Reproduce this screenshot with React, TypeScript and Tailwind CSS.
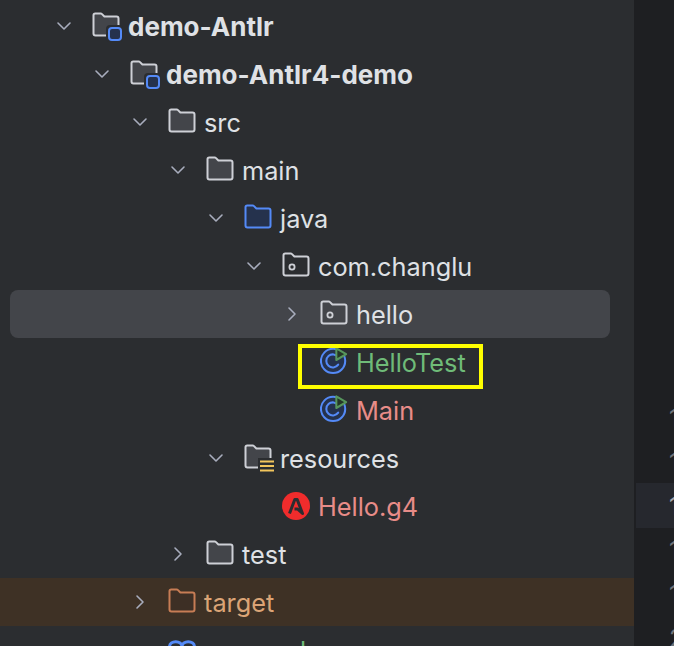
import React from 'react';
import { ChevronDown, ChevronRight } from 'lucide-react';

type Icon = 'module' | 'folder' | 'source' | 'package' | 'resources' | 'target' | 'runClass' | 'antlr' | 'maven';

interface Row {
  name: string;
  depth: number;
  icon: Icon;
  open?: boolean;
  leaf?: boolean;
  bold?: boolean;
  color?: string;
}

const rows: Row[] = [
  { name: 'demo-Antlr', depth: 0, icon: 'module', open: true, bold: true },
  { name: 'demo-Antlr4-demo', depth: 1, icon: 'module', open: true, bold: true },
  { name: 'src', depth: 2, icon: 'folder', open: true },
  { name: 'main', depth: 3, icon: 'folder', open: true },
  { name: 'java', depth: 4, icon: 'source', open: true },
  { name: 'com.changlu', depth: 5, icon: 'package', open: true },
  { name: 'hello', depth: 6, icon: 'package' },
  { name: 'HelloTest', depth: 6, icon: 'runClass', leaf: true, color: 'text-[#6fbb78]' },
  { name: 'Main', depth: 6, icon: 'runClass', leaf: true, color: 'text-[#e88c88]' },
  { name: 'resources', depth: 4, icon: 'resources', open: true },
  { name: 'Hello.g4', depth: 5, icon: 'antlr', leaf: true, color: 'text-[#e88c88]' },
  { name: 'test', depth: 3, icon: 'folder' },
  { name: 'target', depth: 2, icon: 'target', color: 'text-[#dba476]' },
  { name: 'pom.xml', depth: 2, icon: 'maven', leaf: true, color: 'text-[#9a9da3]' },
];

const folderPath = 'M1.5 3.2C1.5 2.2 2.2 1.5 3.2 1.5H8.6C9.2 1.5 9.6 1.7 10 2.1L12.4 4.5H24.5C25.6 4.5 26.5 5.4 26.5 6.5V21.5C26.5 22.6 25.6 23.5 24.5 23.5H3.5C2.4 23.5 1.5 22.6 1.5 21.5Z';

function FolderShape({ fill = '#43454a', stroke = '#ced0d6' }: { fill?: string; stroke?: string }) {
  return <path d={folderPath} fill={fill} stroke={stroke} strokeWidth="2" strokeLinejoin="round" />;
}

function TreeIcon({ icon }: { icon: Icon }) {
  if (icon === 'runClass') {
    return (
      <svg width="30" height="30" viewBox="0 0 30 30" fill="none" className="-mt-1">
        <circle cx="14" cy="16" r="13" fill="#25324d" stroke="#548af7" strokeWidth="2.2" />
        <path d="M19.5 12A7 7 0 1 0 19.5 20" stroke="#548af7" strokeWidth="2.2" strokeLinecap="round" />
        <path d="M17.5 2.5L28 8.7L17.5 15Z" fill="#253627" stroke="#57965c" strokeWidth="2.2" strokeLinejoin="round" />
      </svg>
    );
  }
  if (icon === 'antlr') {
    return (
      <svg width="28" height="28" viewBox="0 0 28 28" fill="none">
        <circle cx="14" cy="14" r="14" fill="#f02c2c" />
        <path d="M7.5 21.5L12.8 7.5H15.2L20.5 21.5L15.5 17H12.5" stroke="#2b2d30" strokeWidth="3" strokeLinejoin="round" />
      </svg>
    );
  }
  if (icon === 'maven') {
    return (
      <svg width="28" height="28" viewBox="0 0 28 28" fill="none" className="overflow-visible">
        <path d="M1.5 26V11C1.5 4 14 4 14 11V26M14 11C14 4 26.5 4 26.5 11V26" stroke="#548af7" strokeWidth="3" />
      </svg>
    );
  }
  return (
    <svg width="28" height="28" viewBox="0 0 28 28" fill="none" className="overflow-visible">
      {icon === 'source' && <FolderShape fill="#25324d" stroke="#548af7" />}
      {icon === 'target' && <FolderShape fill="#3d2f25" stroke="#c77d55" />}
      {(icon === 'folder' || icon === 'module' || icon === 'resources') && <FolderShape />}
      {icon === 'package' && (
        <>
          <FolderShape fill="none" />
          <circle cx="10" cy="15" r="2.6" stroke="#ced0d6" strokeWidth="1.8" />
        </>
      )}
      {icon === 'module' && (
        <>
          <rect x="14" y="13" width="17" height="17" rx="4" fill="#2b2d30" />
          <rect x="17" y="16" width="12" height="12" rx="3" fill="#25324d" stroke="#548af7" strokeWidth="2" />
        </>
      )}
      {icon === 'resources' && (
        <>
          <rect x="14" y="14" width="17" height="15" fill="#2b2d30" />
          <path d="M16 17.5H30M16 22H30M16 26.5H30" stroke="#f2c55c" strokeWidth="2" />
        </>
      )}
    </svg>
  );
}

function TreeRow({ row }: { row: Row }) {
  const isTarget = row.name === 'target';
  const isSelected = row.name === 'hello';
  const isPom = row.name === 'pom.xml';
  return (
    <div className={`relative h-12 shrink-0 flex items-center ${isTarget ? 'bg-[#3e3125]' : ''}`}>
      {isSelected && <div className="absolute left-[10px] w-[600px] h-12 rounded-lg bg-[#43454a]" />}
      <div className="relative flex items-center" style={{ marginLeft: 52 + row.depth * 38 }}>
        <div className="w-6 h-6 flex items-center justify-center text-[#a8adbd]">
          {row.leaf ? null : row.open ? (
            <ChevronDown size={26} strokeWidth={1.6} />
          ) : (
            <ChevronRight size={26} strokeWidth={1.6} />
          )}
        </div>
        <div className="w-7 h-7 ml-4 flex items-center">
          <TreeIcon icon={row.icon} />
        </div>
        <span
          className={`ml-2 pt-px leading-none whitespace-nowrap ${row.bold ? 'text-[26px] font-bold' : 'text-[25.3px]'} ${row.color ?? 'text-[#dfe1e5]'}`}
        >
          {isPom ? (
            <>
              pom.xm<span className="text-[#6fbb78]">l</span>
            </>
          ) : (
            row.name
          )}
        </span>
      </div>
    </div>
  );
}

export default function App() {
  const gutter = ['15', '16', '17', '18', '19', '20'];
  return (
    <div className="relative w-[674px] h-[646px] overflow-hidden flex bg-[#1e1f22] font-['Inter',sans-serif]">
      {/* Project tree */}
      <div className="w-[634px] shrink-0 bg-[#2b2d30] pt-[2px] flex flex-col">
        {rows.map((row) => (
          <TreeRow key={row.name} row={row} />
        ))}
      </div>

      {/* Editor gutter, cut off by the window edge */}
      <div className="flex-1 pt-[397px] ml-[2px] flex flex-col">
        {gutter.map((n, i) => (
          <div
            key={n}
            className={`shrink-0 flex items-center pl-[33px] text-[24px] whitespace-nowrap ${i === 2 ? 'h-[45px] -mt-[2px] mb-px pt-[2px] bg-[#26282e] text-[#a1a3ab]' : 'h-11 text-[#6f737a]'}`}
          >
            {n}
          </div>
        ))}
      </div>

      {/* Yellow annotation box */}
      <div className="absolute left-[298px] top-[344px] w-[185px] h-[45px] border-4 border-[#ffff00]" />
    </div>
  );
}
